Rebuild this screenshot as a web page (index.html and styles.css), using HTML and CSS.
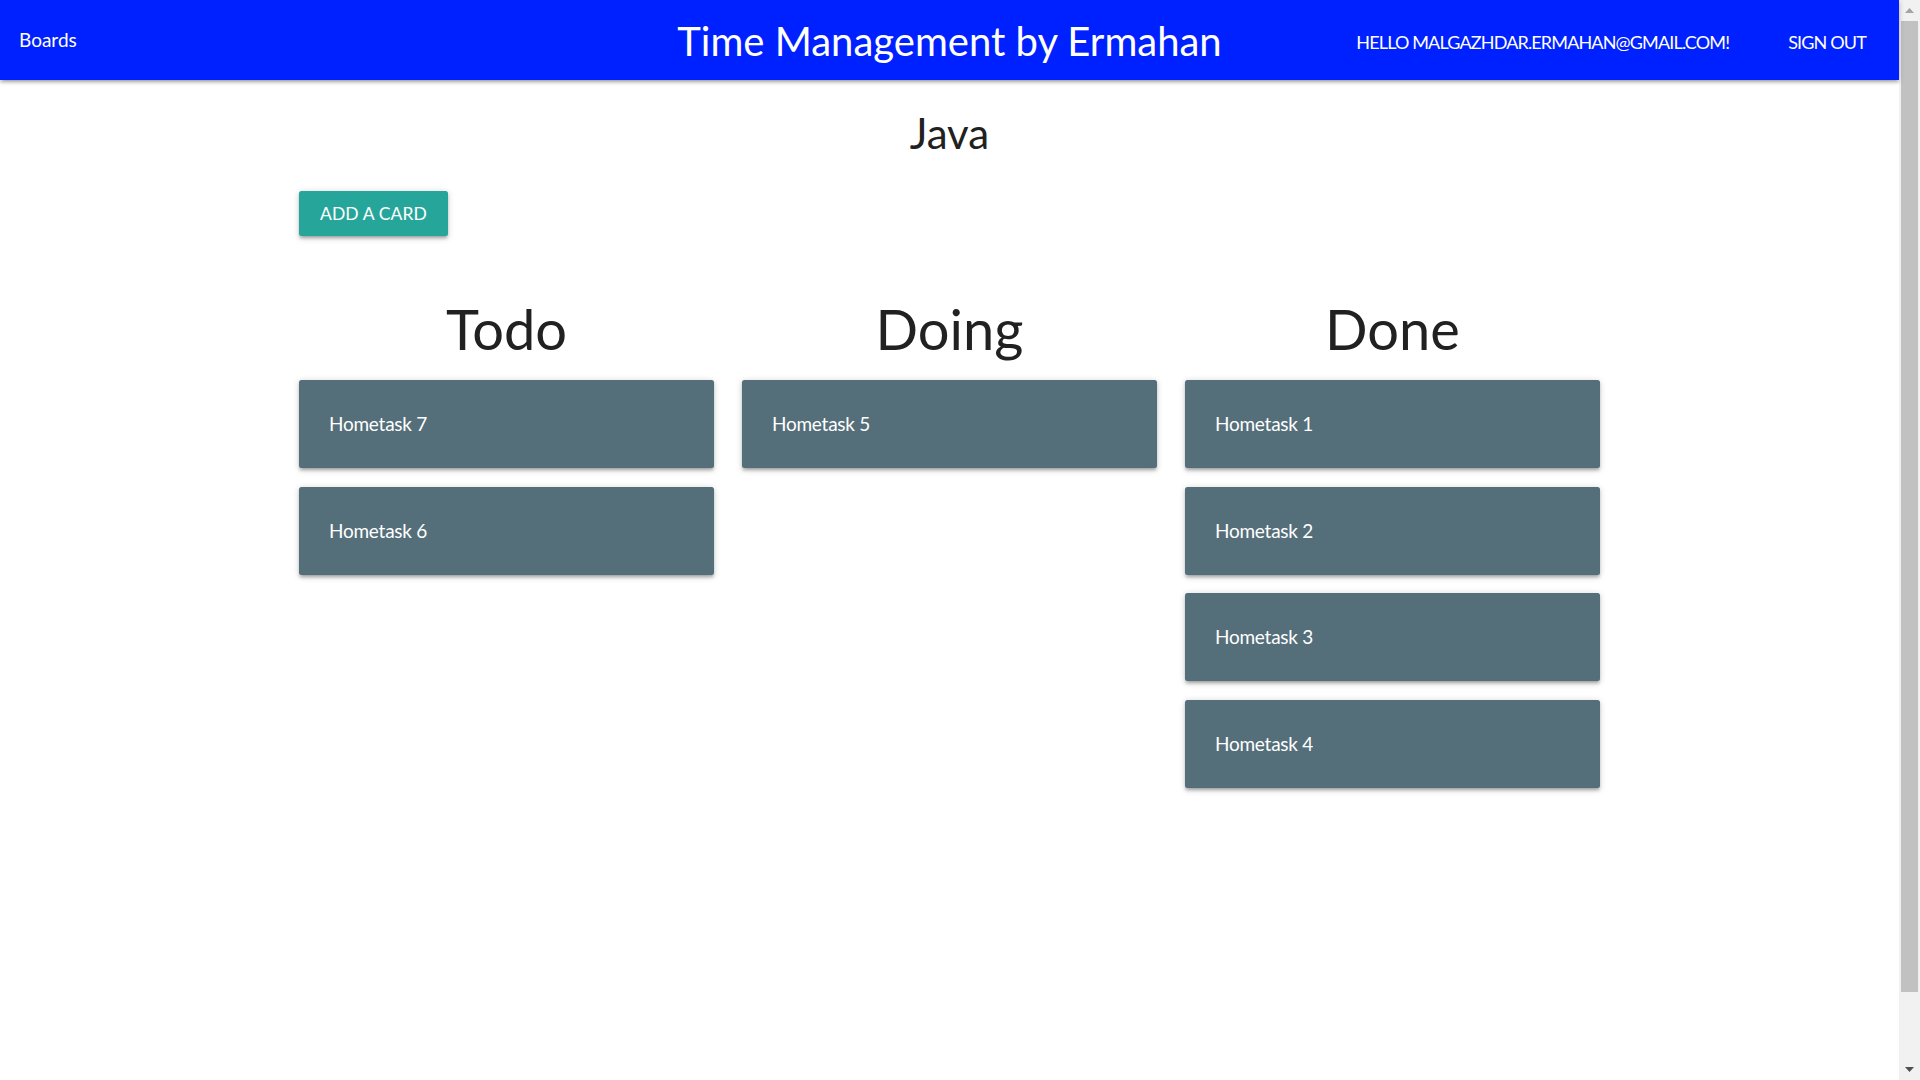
FILE: index.html
```html
<!DOCTYPE html>
<html lang="en">
<head>
<meta charset="utf-8">
<title>Time Management by Ermahan</title>
<link rel="stylesheet" href="styles.css">
</head>
<body>
<div class="page">
  <nav class="nav">
    <a class="nav-left">Boards</a>
    <a class="brand">Time Management by Ermahan</a>
    <ul class="nav-right">
      <li>HELLO MALGAZHDAR.ERMAHAN@GMAIL.COM!</li>
      <li>SIGN OUT</li>
    </ul>
  </nav>
  <main class="container">
    <h4 class="board-title">Java</h4>
    <div class="actions"><button class="btn">ADD A CARD</button></div>
    <div class="columns">
      <section class="column">
        <h3 class="column-title">Todo</h3>
        <div class="card">Hometask 7</div>
        <div class="card">Hometask 6</div>
      </section>
      <section class="column">
        <h3 class="column-title">Doing</h3>
        <div class="card">Hometask 5</div>
      </section>
      <section class="column">
        <h3 class="column-title">Done</h3>
        <div class="card">Hometask 1</div>
        <div class="card">Hometask 2</div>
        <div class="card">Hometask 3</div>
        <div class="card">Hometask 4</div>
      </section>
    </div>
  </main>
</div>
<div class="scrollbar" aria-hidden="true">
  <div class="sb-btn">
    <svg width="9" height="5" viewBox="0 0 9 5"><path d="M4.5 0 L9 5 L0 5 Z" fill="#a3a3a3"/></svg>
  </div>
  <div class="sb-thumb"></div>
  <div class="sb-track"></div>
  <div class="sb-btn">
    <svg width="9" height="5" viewBox="0 0 9 5"><path d="M0 0 L9 0 L4.5 5 Z" fill="#505050"/></svg>
  </div>
</div>
</body>
</html>
```
FILE: styles.css
```css
html, body {
  margin: 0;
  padding: 0;
}
body {
  display: flex;
  height: 1080px;
  overflow: hidden;
  font-family: "Lato", "Open Sans", sans-serif;
  color: #212121;
  background: #ffffff;
}
.page {
  flex: 1;
  min-width: 0;
}

/* Fake browser scrollbar */
.scrollbar {
  width: 21px;
  flex: none;
  height: 1080px;
  display: flex;
  flex-direction: column;
  background: #f1f1f1;
}
.sb-btn {
  height: 21px;
  flex: none;
  display: flex;
  align-items: center;
  justify-content: center;
}
.sb-btn svg {
  display: block;
}
.sb-thumb {
  height: 971px;
  flex: none;
  margin: 0 2px;
  background: #c1c1c1;
}
.sb-track {
  flex: 1;
}

/* Navbar */
.nav {
  display: grid;
  grid-template-columns: 1fr auto 1fr;
  align-items: center;
  height: 80px;
  background: #0021ff;
  color: #ffffff;
  box-shadow: 0 2.5px 2.5px 0 rgba(0,0,0,.14), 0 3.75px 1.25px -2.5px rgba(0,0,0,.12), 0 1.25px 6px 0 rgba(0,0,0,.2);
  position: relative;
  z-index: 2;
}
.nav-left {
  justify-self: start;
  padding-left: 19px;
  font-size: 19px;
  line-height: 24px;
  margin-top: -1px;
}
.brand {
  font-size: 40px;
  line-height: 50px;
  margin-top: 2px;
}
.nav-right {
  justify-self: end;
  display: flex;
  gap: 59px;
  margin: 4px 0 0;
  padding: 0 33px 0 0;
  list-style: none;
  font-size: 18px;
  letter-spacing: -0.85px;
  line-height: 24px;
}

/* Content */
.container {
  width: 1301px;
  margin: 0 auto;
}
.board-title {
  margin: 29px 0 0;
  text-align: center;
  font-size: 42px;
  line-height: 49.5px;
  font-weight: 400;
}
.actions {
  margin-top: 32.5px;
}
.btn {
  height: 45px;
  padding: 0 21px;
  border: none;
  border-radius: 2.5px;
  background: #26a69a;
  color: #ffffff;
  font-family: inherit;
  font-size: 17.5px;
  letter-spacing: 0.1px;
  text-transform: uppercase;
  box-shadow: 0 2.5px 2.5px 0 rgba(0,0,0,.14), 0 3.75px 1.25px -2.5px rgba(0,0,0,.12), 0 1.25px 6px 0 rgba(0,0,0,.2);
  cursor: pointer;
}
.columns {
  display: grid;
  grid-template-columns: repeat(3, 415px);
  column-gap: 28px;
  margin-top: 61.5px;
  align-items: start;
}
.column {
  display: flex;
  flex-direction: column;
  gap: 18.7px;
}
.column-title {
  margin: 0 0 2.3px;
  text-align: center;
  font-size: 56px;
  line-height: 61.6px;
  font-weight: 400;
}
.card {
  height: 88px;
  box-sizing: border-box;
  padding: 30px;
  line-height: 28px;
  font-size: 19px;
  letter-spacing: -0.25px;
  color: #ffffff;
  background: #546e7a;
  border-radius: 2.5px;
  box-shadow: 0 2.5px 2.5px 0 rgba(0,0,0,.14), 0 3.75px 1.25px -2.5px rgba(0,0,0,.12), 0 1.25px 6px 0 rgba(0,0,0,.2);
}
```
